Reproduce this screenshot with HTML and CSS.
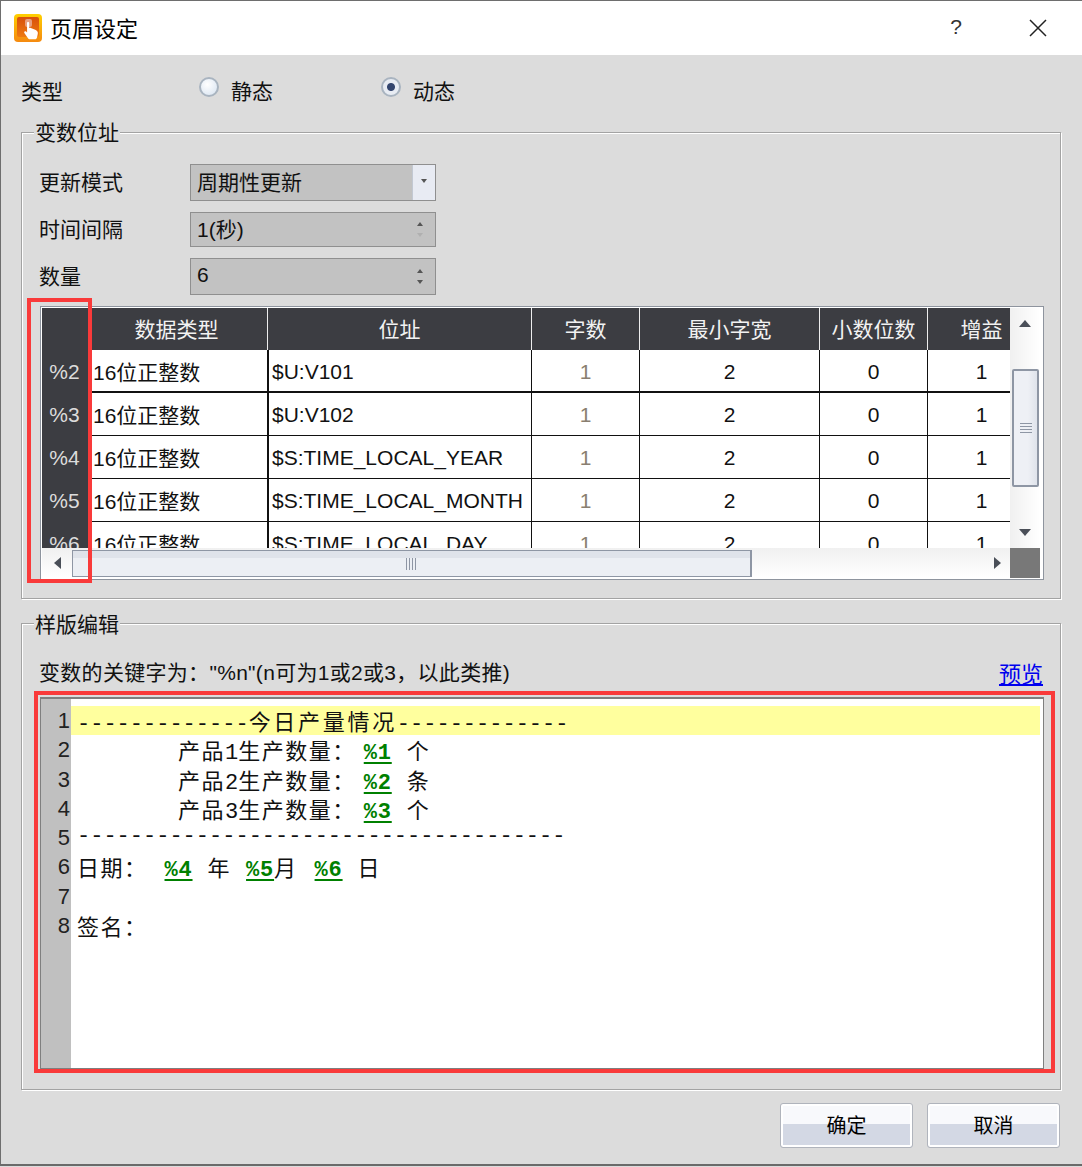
FILE: index.html
```html
<!DOCTYPE html>
<html lang="zh-CN">
<head>
<meta charset="utf-8">
<title>页眉设定</title>
<link rel="stylesheet" href="styles.css">
</head>
<body>
<div class="window">
  <header class="titlebar">
    <svg class="app-icon" viewBox="0 0 28 28" width="28" height="28">
      <defs>
        <linearGradient id="ig" x1="0" y1="0" x2="0" y2="1"><stop offset="0" stop-color="#ffd000"/><stop offset="1" stop-color="#f58a10"/></linearGradient>
        <linearGradient id="ih" x1="0" y1="0" x2="0" y2="1"><stop offset="0" stop-color="#d8500c"/><stop offset="1" stop-color="#ee7a10"/></linearGradient>
      </defs>
      <rect x="0" y="0" width="28" height="28" rx="4" fill="url(#ig)"/>
      <rect x="3" y="3" width="22" height="20" rx="2" fill="url(#ih)"/>
      <rect x="11" y="5" width="7" height="8" rx="2" fill="#e8a080"/>
      <path d="M13 9c0-1.300 2.200-1.300 2.200 0v5l1-.3 5 2c2 .8 3 2.300 2.600 4l-.8 3.800c-.3 1.200-1 1.800-2 1.800h-5c-1 0-1.500-.4-2-1l-3.500-5c-1-1.400.4-2.600 1.600-1.700l1 .8z" fill="#fff"/>
    </svg>
    <span class="title-text">页眉设定</span>
    <span class="help">?</span>
    <svg class="close" viewBox="0 0 18 18" width="18" height="18"><path d="M1 1l16 16M17 1L1 17" stroke="#222" stroke-width="1.500" fill="none"/></svg>
  </header>

  <main class="content">
    <div class="type-row">
      <span class="type-label">类型</span>
      <label class="radio-item first"><span class="radio"></span>静态</label>
      <label class="radio-item"><span class="radio on"></span>动态</label>
    </div>

    <fieldset class="group group-var">
      <legend>变数位址</legend>
      <div class="form-grid">
        <span class="form-label">更新模式</span>
        <div class="field tall"><span class="field-val">周期性更新</span><span class="combo-btn"><i class="tri-down small"></i></span></div>
        <span class="form-label">时间间隔</span>
        <div class="field"><span class="field-val">1(秒)</span><span class="spin"><i class="tri-up small"></i><i class="tri-down small faint"></i></span></div>
        <span class="form-label">数量</span>
        <div class="field tall"><span class="field-val">6</span><span class="spin"><i class="tri-up small"></i><i class="tri-down small"></i></span></div>
      </div>

      <div class="sheet">
        <div class="sheet-view">
          <table class="sheet-table">
            <colgroup><col class="c0"><col class="c1"><col class="c2"><col class="c3"><col class="c4"><col class="c5"><col class="c6"></colgroup>
            <thead>
              <tr><th></th><th class="shift">数据类型</th><th>位址</th><th>字数</th><th>最小字宽</th><th>小数位数</th><th>增益</th></tr>
            </thead>
            <tbody>
              <tr class="current"><th>%2</th><td class="tl">16位正整数</td><td class="addr">$U:V101</td><td class="dim">1</td><td>2</td><td>0</td><td>1</td></tr>
              <tr><th>%3</th><td class="tl">16位正整数</td><td class="addr">$U:V102</td><td class="dim">1</td><td>2</td><td>0</td><td>1</td></tr>
              <tr><th>%4</th><td class="tl">16位正整数</td><td class="addr">$S:TIME_LOCAL_YEAR</td><td class="dim">1</td><td>2</td><td>0</td><td>1</td></tr>
              <tr><th>%5</th><td class="tl">16位正整数</td><td class="addr">$S:TIME_LOCAL_MONTH</td><td class="dim">1</td><td>2</td><td>0</td><td>1</td></tr>
              <tr><th>%6</th><td class="tl">16位正整数</td><td class="addr">$S:TIME_LOCAL_DAY</td><td class="dim">1</td><td>2</td><td>0</td><td>1</td></tr>
            </tbody>
          </table>
        </div>
        <div class="vbar">
          <span class="vzone"><i class="tri-up"></i></span>
          <span class="vthumb"><i class="grip-h"></i></span>
          <span class="vzone"><i class="tri-down"></i></span>
        </div>
        <div class="hbar">
          <span class="hzone"><i class="tri-left"></i></span>
          <span class="hthumb"><i class="grip-v"></i></span>
          <span class="hzone end"><i class="tri-right"></i></span>
        </div>
        <div class="corner"></div>
      </div>
    </fieldset>

    <fieldset class="group group-tpl">
      <legend>样版编辑</legend>
      <div class="hint-row">
        <span class="hint">变数的关键字为："%n"(n可为1或2或3，以此类推)</span>
        <a class="preview" href="#">预览</a>
      </div>
      <div class="editor">
        <div class="gutter"><span>1</span><span>2</span><span>3</span><span>4</span><span>5</span><span>6</span><span>7</span><span>8</span></div>
        <div class="code">
          <div class="line hl">-------------<span class="cn wide">今日产量情况</span>-------------</div>
          <div class="line ind"><span class="cn">产品</span>1<span class="cn">生产数量：</span><b class="var">%1</b><span class="cn gap">个</span></div>
          <div class="line ind"><span class="cn">产品</span>2<span class="cn">生产数量：</span><b class="var">%2</b><span class="cn gap">条</span></div>
          <div class="line ind"><span class="cn">产品</span>3<span class="cn">生产数量：</span><b class="var">%3</b><span class="cn gap">个</span></div>
          <div class="line">-------------------------------------</div>
          <div class="line"><span class="cn">日期：</span><b class="var v4">%4</b><span class="cn gap">年</span><b class="var v5">%5</b><span class="cn">月</span><b class="var v6">%6</b><span class="cn gap">日</span></div>
          <div class="line"></div>
          <div class="line"><span class="cn">签名：</span></div>
        </div>
      </div>
    </fieldset>

    <footer class="actions">
      <button class="btn" type="button">确定</button>
      <button class="btn" type="button">取消</button>
    </footer>
  </main>

  <div class="mark mark-col"></div>
  <div class="mark mark-editor"></div>
</div>
</body>
</html>
```

FILE: styles.css
```css
* { box-sizing: border-box; }
html, body { margin: 0; padding: 0; }
body {
  width: 1082px;
  height: 1167px;
  overflow: hidden;
  background: #dcdcdc;
  font-family: "Liberation Sans", "Noto Sans CJK SC", sans-serif;
  color: #111;
}
.window {
  position: relative;
  width: 1082px;
  height: 1166px;
  background: #dcdcdc;
  border-left: 1px solid #6e6e6e;
  border-top: 1px solid #6e6e6e;
  border-bottom: 2px solid #6a6a6a;
  display: flex;
  flex-direction: column;
}
.titlebar {
  height: 54px;
  flex: none;
  background: #fff;
  display: flex;
  align-items: center;
  padding-left: 13px;
}
.app-icon { flex: none; }
.title-text { font-size: 22px; margin-left: 8px; color: #000; margin-top: -2px; }
.help { margin-left: auto; font-size: 21px; color: #333; margin-right: 67px; margin-top: -2px; }
.close { margin-right: 35px; }

.content { flex: 1; padding: 0 21px 0 20px; display: flex; flex-direction: column; }

.type-row { height: 65px; flex: none; display: flex; align-items: center; font-size: 21px; padding-top: 4px; }
.type-label { width: 178px; }
.radio-item { display: flex; align-items: center; gap: 12px; width: 182px; }
.radio {
  width: 20px; height: 20px; border-radius: 50%;
  border: 2px solid #a9b4c0;
  background: radial-gradient(circle at 40% 35%, #fff, #d6e2f0);
  display: block;
  margin-top: -5px;
}
.radio.on { background: radial-gradient(circle, #33456e 0 3.500px, #e8ecf3 4.500px); }

.group {
  margin: 0;
  min-width: 0;
  border: 1px solid #a3a3a3;
  box-shadow: inset 1px 1px 0 #fff, 1px 1px 0 #fff;
  border-radius: 0;
}
.group legend {
  padding: 0 1px;
  margin-left: -6px;
  font-size: 21px;
  line-height: 25px;
  height: 24px;
  background: #dcdcdc;
}
.group-tpl legend { line-height: 27px; }
.group-var { height: 479px; padding: 20px 16px 18px 18px; }
.group-tpl { height: 479px; margin-top: 12px; padding: 26px 16px 20px 18px; }

.form-grid {
  display: grid;
  grid-template-columns: 150px 246px;
  grid-template-rows: 37px 35px 37px;
  row-gap: 11px;
  align-items: center;
}
.form-label { font-size: 21px; margin-left: -1px; padding-bottom: 3px; }
.field {
  height: 35px;
  border: 1px solid #8f8f8f;
  background: #c2c2c2;
  display: flex;
  align-items: center;
  font-size: 21px;
  padding-left: 6px;
  overflow: hidden;
}
.field.tall { height: 37px; }
.field-val { flex: 1; margin-top: -3px; }
.combo-btn {
  width: 23px; align-self: stretch; background: #e8ebf3; border-left: 1px solid #c2c8d2;
  display: flex; align-items: center; justify-content: center; padding-bottom: 4px;
}
.spin {
  width: 28px; display: flex; flex-direction: column; align-items: center; gap: 7px; padding-right: 3px;
}

i { display: block; width: 0; height: 0; }
.tri-up { border: 6px solid transparent; border-top: 0; border-bottom: 7px solid #4a4f58; }
.tri-down { border: 6px solid transparent; border-bottom: 0; border-top: 7px solid #4a4f58; }
.tri-left { border: 6px solid transparent; border-left: 0; border-right: 7px solid #4a4f58; }
.tri-right { border: 6px solid transparent; border-right: 0; border-left: 7px solid #4a4f58; }
.tri-up.small { border-width: 0 3.500px 4px; border-bottom-color: #555; }
.tri-down.small { border-width: 4px 3.500px 0; border-top-color: #555; }
.tri-down.faint { border-top-color: #b0b0b0; }

.sheet {
  margin-top: 11px;
  height: 274px;
  border: 1px solid #8e949e;
  background: #fff;
  padding: 1px 2px 1px 1px;
  display: grid;
  grid-template-columns: 968px 30px;
  grid-template-rows: 240px 30px;
}
.sheet-view { overflow: hidden; background: #fff; }
.sheet-table {
  width: 993px;
  table-layout: fixed;
  border-collapse: separate;
  border-spacing: 0;
  font-size: 21px;
}
.c0 { width: 49px; }
.c1 { width: 176px; }
.c2 { width: 264px; }
.c3 { width: 108px; }
.c4 { width: 180px; }
.c5 { width: 108px; }
.c6 { width: 108px; }
.sheet-table thead th {
  height: 42px;
  padding: 0 0 2px;
  background: #3c3d42;
  color: #f2f2f2;
  font-weight: 400;
  font-size: 21px;
  border-left: 1px solid #eee;
}
.sheet-table thead th:first-child { border-left: 0; }
.sheet-table thead th.shift { padding-right: 6px; }
.sheet-table tbody th {
  height: 43px;
  padding: 1px 4px 0 0;
  background: #3c3d42;
  color: #dcdcdc;
  font-weight: 400;
  font-size: 21px;
}
.sheet-table td {
  height: 43px;
  padding: 2px 0 0;
  text-align: center;
  border-left: 1px solid #111;
  border-bottom: 1px solid #111;
  color: #111;
  white-space: nowrap;
}
.sheet-table td.tl { text-align: left; padding: 0 0 0 2px; border-left: 0; }
.sheet-table td.addr { text-align: left; padding-left: 3px; border-left: 2px solid #111; }
.sheet-table td.dim { color: #8a7f70; }
.sheet-table tr.current td { border-bottom-width: 2px; }

.vbar {
  display: flex; flex-direction: column;
  background: linear-gradient(90deg, #f0f0f0, #fff);
}
.vzone { height: 61px; display: flex; align-items: center; justify-content: center; flex: none; }
.vzone:first-child { padding-bottom: 30px; }
.vzone:last-child { padding-top: 30px; }
.vthumb {
  height: 118px; margin: 0 1px 0 2px;
  border: 2px solid #8e96a4; border-radius: 2px;
  background: linear-gradient(90deg, #eef0f5 60%, #dfe3eb);
  display: flex; align-items: center; justify-content: center;
}
.grip-h {
  width: 12px; height: 10px;
  background: repeating-linear-gradient(180deg, #8e96a4 0 1px, transparent 1px 3px);
}
.hbar {
  display: flex;
  background: linear-gradient(180deg, #f0f0f0, #fff);
}
.hzone { width: 30px; flex: none; display: flex; align-items: center; justify-content: center; }
.hzone.end { flex: 1; justify-content: flex-end; padding-right: 9px; }
.hthumb {
  width: 680px; margin: 2px 0 1px;
  border: 1px solid #8e96a4; border-right-width: 2px;
  background: linear-gradient(180deg, #dfe3ea 0 7px, #eceff4 7px);
  display: flex; align-items: center; justify-content: center;
}
.grip-v {
  width: 11px; height: 12px;
  background: repeating-linear-gradient(90deg, #8e96a4 0 1px, transparent 1px 3px);
}
.corner { background: #787878; }

.hint-row { height: 24px; display: flex; align-items: center; justify-content: space-between; font-size: 21px; letter-spacing: .3px; margin-left: -1px; }
.hint { margin-top: -4px; }
.preview { color: #0000ee; font-size: 22px; letter-spacing: 0; text-decoration: underline; margin-top: -2px; margin-right: 1px; }

.editor {
  margin-top: 12px;
  height: 372px;
  border: 1px solid #7f7f7f;
  border-width: 2px 1px 1px 1px;
  background: #fff;
  padding-right: 3px;
  display: grid;
  grid-template-columns: 30px 1fr;
}
.gutter {
  background: #c0c0c0;
  padding-top: 7px;
  font-size: 22px;
  color: #222;
  display: flex;
  flex-direction: column;
  align-items: flex-end;
  padding-right: 1px;
}
.gutter span { height: 29.300px; line-height: 29.300px; }
.code {
  padding-top: 7px;
  font-family: "Liberation Mono", "Noto Sans CJK SC", monospace;
  font-size: 22px;
  color: #111;
}
.line { height: 29.300px; line-height: 28px; padding-left: 6px; white-space: pre; }
.line.hl { background: #ffff9e; }
.line.ind { padding-left: 107px; }
.cn { font-family: "Noto Sans CJK SC", sans-serif; letter-spacing: 1.500px; }
.cn.wide { letter-spacing: 2.700px; }
.var {
  color: #008000;
  font-weight: 700;
  letter-spacing: .8px;
  margin-left: 8px;
  text-decoration: underline;
  text-decoration-thickness: 2px;
  text-underline-offset: 3px;
}
.gap { margin-left: 15px; }
.v4 { margin-left: 17px; }
.v5 { margin-left: 15px; }
.v6 { margin-left: 17px; }

.actions {
  margin-top: 13px;
  display: flex;
  justify-content: flex-end;
  gap: 14px;
  padding-right: 1px;
}
.btn {
  height: 45px;
  width: 133px;
  padding: 0 0 3px;
  font: 400 20px "Liberation Sans", "Noto Sans CJK SC", sans-serif;
  color: #000;
  border: 1px solid #b0b4bc;
  border-radius: 3px;
  box-shadow: inset 0 0 0 2px #fff;
  background: linear-gradient(180deg, #f8f9fc 0 20px, #d3d8e4 20px);
}

.mark { position: absolute; border: 4px solid #f93a3a; pointer-events: none; }
.mark-col { left: 26px; top: 297px; width: 65px; height: 285px; }
.mark-editor { left: 33px; top: 690px; width: 1021px; height: 382px; }
```
